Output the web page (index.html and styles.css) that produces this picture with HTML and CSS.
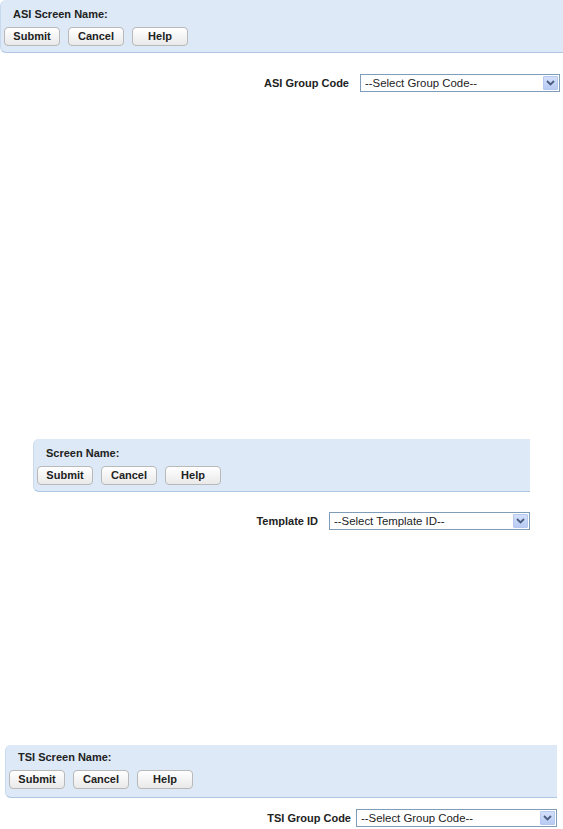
FILE: index.html
```html
<!DOCTYPE html>
<html>
<head>
<meta charset="utf-8">
<link rel="stylesheet" href="styles.css">
</head>
<body>
<div class="section s1">
  <div class="panel">
    <div class="title">ASI Screen Name:</div>
    <div class="buttons">
      <button class="btn">Submit</button>
      <button class="btn">Cancel</button>
      <button class="btn">Help</button>
    </div>
  </div>
  <div class="row">
    <label class="lbl">ASI Group Code</label>
    <div class="sel"><span class="sel-text">--Select Group Code--</span><span class="arrow"><svg width="9" height="6" viewBox="0 0 9 6"><path d="M1 1 L4.5 4.5 L8 1" fill="none" stroke="#4a5d80" stroke-width="1.8"/></svg></span></div>
  </div>
</div>

<div class="section s2">
  <div class="panel">
    <div class="title">Screen Name:</div>
    <div class="buttons">
      <button class="btn">Submit</button>
      <button class="btn">Cancel</button>
      <button class="btn">Help</button>
    </div>
  </div>
  <div class="row">
    <label class="lbl">Template ID</label>
    <div class="sel"><span class="sel-text">--Select Template ID--</span><span class="arrow"><svg width="9" height="6" viewBox="0 0 9 6"><path d="M1 1 L4.5 4.5 L8 1" fill="none" stroke="#4a5d80" stroke-width="1.8"/></svg></span></div>
  </div>
</div>

<div class="section s3">
  <div class="panel">
    <div class="title">TSI Screen Name:</div>
    <div class="buttons">
      <button class="btn">Submit</button>
      <button class="btn">Cancel</button>
      <button class="btn">Help</button>
    </div>
  </div>
  <div class="row">
    <label class="lbl">TSI Group Code</label>
    <div class="sel"><span class="sel-text">--Select Group Code--</span><span class="arrow"><svg width="9" height="6" viewBox="0 0 9 6"><path d="M1 1 L4.5 4.5 L8 1" fill="none" stroke="#4a5d80" stroke-width="1.8"/></svg></span></div>
  </div>
</div>
</body>
</html>
```

FILE: styles.css
```css
html, body {
  margin: 0;
  padding: 0;
  background: #ffffff;
  overflow-x: hidden;
}
body {
  font-family: "Liberation Sans", Arial, sans-serif;
  font-size: 11px;
  color: #222;
}
.section {
  display: flex;
  flex-direction: column;
}
.s1 {
  width: 560px;
  margin-left: 0;
}
.s1 .panel {
  margin-right: -10px;
}
.s2 {
  width: 497px;
  margin-left: 33px;
  margin-top: 347px;
}
.s3 {
  width: 552px;
  margin-left: 5px;
  margin-top: 215px;
}
.panel {
  background: #dde9f6;
  border-left: 1px solid #c9daee;
  border-bottom: 1px solid #aec7e4;
  border-radius: 6px 0 0 6px;
  padding: 8px 0 6px 3px;
  height: 38px;
}
.title {
  font-weight: bold;
  line-height: 13px;
  padding-left: 9px;
  color: #222;
}
.s3 .title {
  margin-top: -2px;
  margin-bottom: 2px;
}
.buttons {
  display: flex;
  gap: 8px;
  margin-top: 6px;
}
.btn {
  width: 56px;
  height: 19px;
  padding: 0;
  margin: 0;
  border: 1px solid #b9b9b9;
  border-radius: 4px;
  background: linear-gradient(#ffffff, #e9e9e9);
  font-family: "Liberation Sans", Arial, sans-serif;
  font-size: 11px;
  font-weight: bold;
  color: #222;
  line-height: 17px;
}
.row {
  display: flex;
  justify-content: flex-end;
  align-items: center;
  gap: 11px;
  margin-top: 21px;
}
.s2 .row {
  margin-top: 20px;
}
.s3 .row {
  margin-top: 11px;
  gap: 5px;
}
.lbl {
  font-weight: bold;
  color: #222;
}
.sel {
  width: 201px;
  height: 18px;
  box-sizing: border-box;
  border: 1px solid #7f9db9;
  background: #fff;
  display: flex;
  align-items: center;
  justify-content: space-between;
  padding: 1px;
}
.s1 .sel {
  width: 200px;
}
.sel-text {
  padding-left: 3px;
  font-size: 11.4px;
  color: #222;
  line-height: 14px;
}
.arrow {
  width: 15px;
  height: 14px;
  box-sizing: border-box;
  background: linear-gradient(#d3e0fa, #b8cbf3);
  border: 1px solid #b6c8ee;
  border-radius: 1px;
  display: flex;
  align-items: center;
  justify-content: center;
}
```
